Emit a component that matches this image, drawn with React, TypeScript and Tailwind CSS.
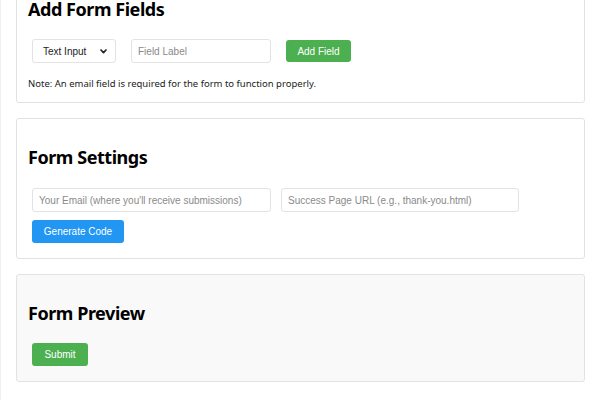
import React from "react";

const sans = { fontFamily: '"Liberation Sans", Arial, sans-serif' };

function Heading({ children }: { children: React.ReactNode }) {
  return (
    <h2 className="mt-[16px] text-[18px] leading-[22px] font-bold tracking-[-0.45px] text-black [font-family:'Noto_Sans',sans-serif]">
      {children}
    </h2>
  );
}

export default function App() {
  return (
    <div className="w-[600px] h-[400px] overflow-hidden bg-white border-l border-[#f0f0f0]">
      <div className="-mt-[30px] flex flex-col gap-[15px] px-[15px]">
        {/* Add Form Fields */}
        <section className="border border-[#e2e2e2] rounded-[3px] bg-white px-[11px] pt-[11px] pb-[11px]">
          <Heading>Add Form Fields</Heading>
          <div className="mt-[19px] flex items-center" style={sans}>
            <div className="ml-[4px] w-[84px] h-[24px] flex items-center justify-between pl-[10px] pr-[8px] border border-[#e3e3e3] rounded-[3px] bg-white text-[10px] text-[#222]">
              <span>Text Input</span>
              <svg width="7" height="5" viewBox="0 0 7 5" fill="none">
                <path d="M1 1 L3.5 3.6 L6 1" stroke="#222" strokeWidth="1.7" strokeLinecap="round" strokeLinejoin="round" />
              </svg>
            </div>
            <input
              placeholder="Field Label"
              className="ml-[15px] w-[140px] h-[24px] px-[6px] border border-[#e3e3e3] rounded-[3px] text-[10px] text-[#222] placeholder:text-[#8a8a8a] outline-none"
              style={sans}
            />
            <button
              className="ml-[15px] w-[65px] h-[22px] rounded-[3px] bg-[#4caf50] text-white text-[10px]"
              style={sans}
            >
              Add Field
            </button>
          </div>
          <p className="mt-[14px] text-[9.5px] leading-[14px] text-[#222] [font-family:'Noto_Sans',sans-serif]">
            Note: An email field is required for the form to function properly.
          </p>
        </section>

        {/* Form Settings */}
        <section className="border border-[#e2e2e2] rounded-[3px] bg-white px-[11px] pt-[11px] pb-[15px]">
          <Heading>Form Settings</Heading>
          <div className="mt-[20px] flex items-center" style={sans}>
            <input
              placeholder="Your Email (where you'll receive submissions)"
              className="ml-[4px] w-[239px] h-[24px] px-[6px] border border-[#e3e3e3] rounded-[3px] text-[10px] text-[#222] placeholder:text-[#8a8a8a] outline-none"
              style={sans}
            />
            <input
              placeholder="Success Page URL (e.g., thank-you.html)"
              className="ml-[10px] w-[238px] h-[24px] px-[6px] border border-[#e3e3e3] rounded-[3px] text-[10px] text-[#222] placeholder:text-[#8a8a8a] outline-none"
              style={sans}
            />
          </div>
          <button
            className="mt-[8px] ml-[4px] w-[92px] h-[23px] rounded-[3px] bg-[#2196f3] text-white text-[10px]"
            style={sans}
          >
            Generate Code
          </button>
        </section>

        {/* Form Preview */}
        <section className="border border-[#e2e2e2] rounded-[3px] bg-[#f9f9f9] px-[11px] pt-[11px] pb-[15px]">
          <Heading>Form Preview</Heading>
          <button
            className="mt-[19px] ml-[4px] w-[56px] h-[23px] rounded-[3px] bg-[#4caf50] text-white text-[10px]"
            style={sans}
          >
            Submit
          </button>
        </section>
      </div>
    </div>
  );
}
